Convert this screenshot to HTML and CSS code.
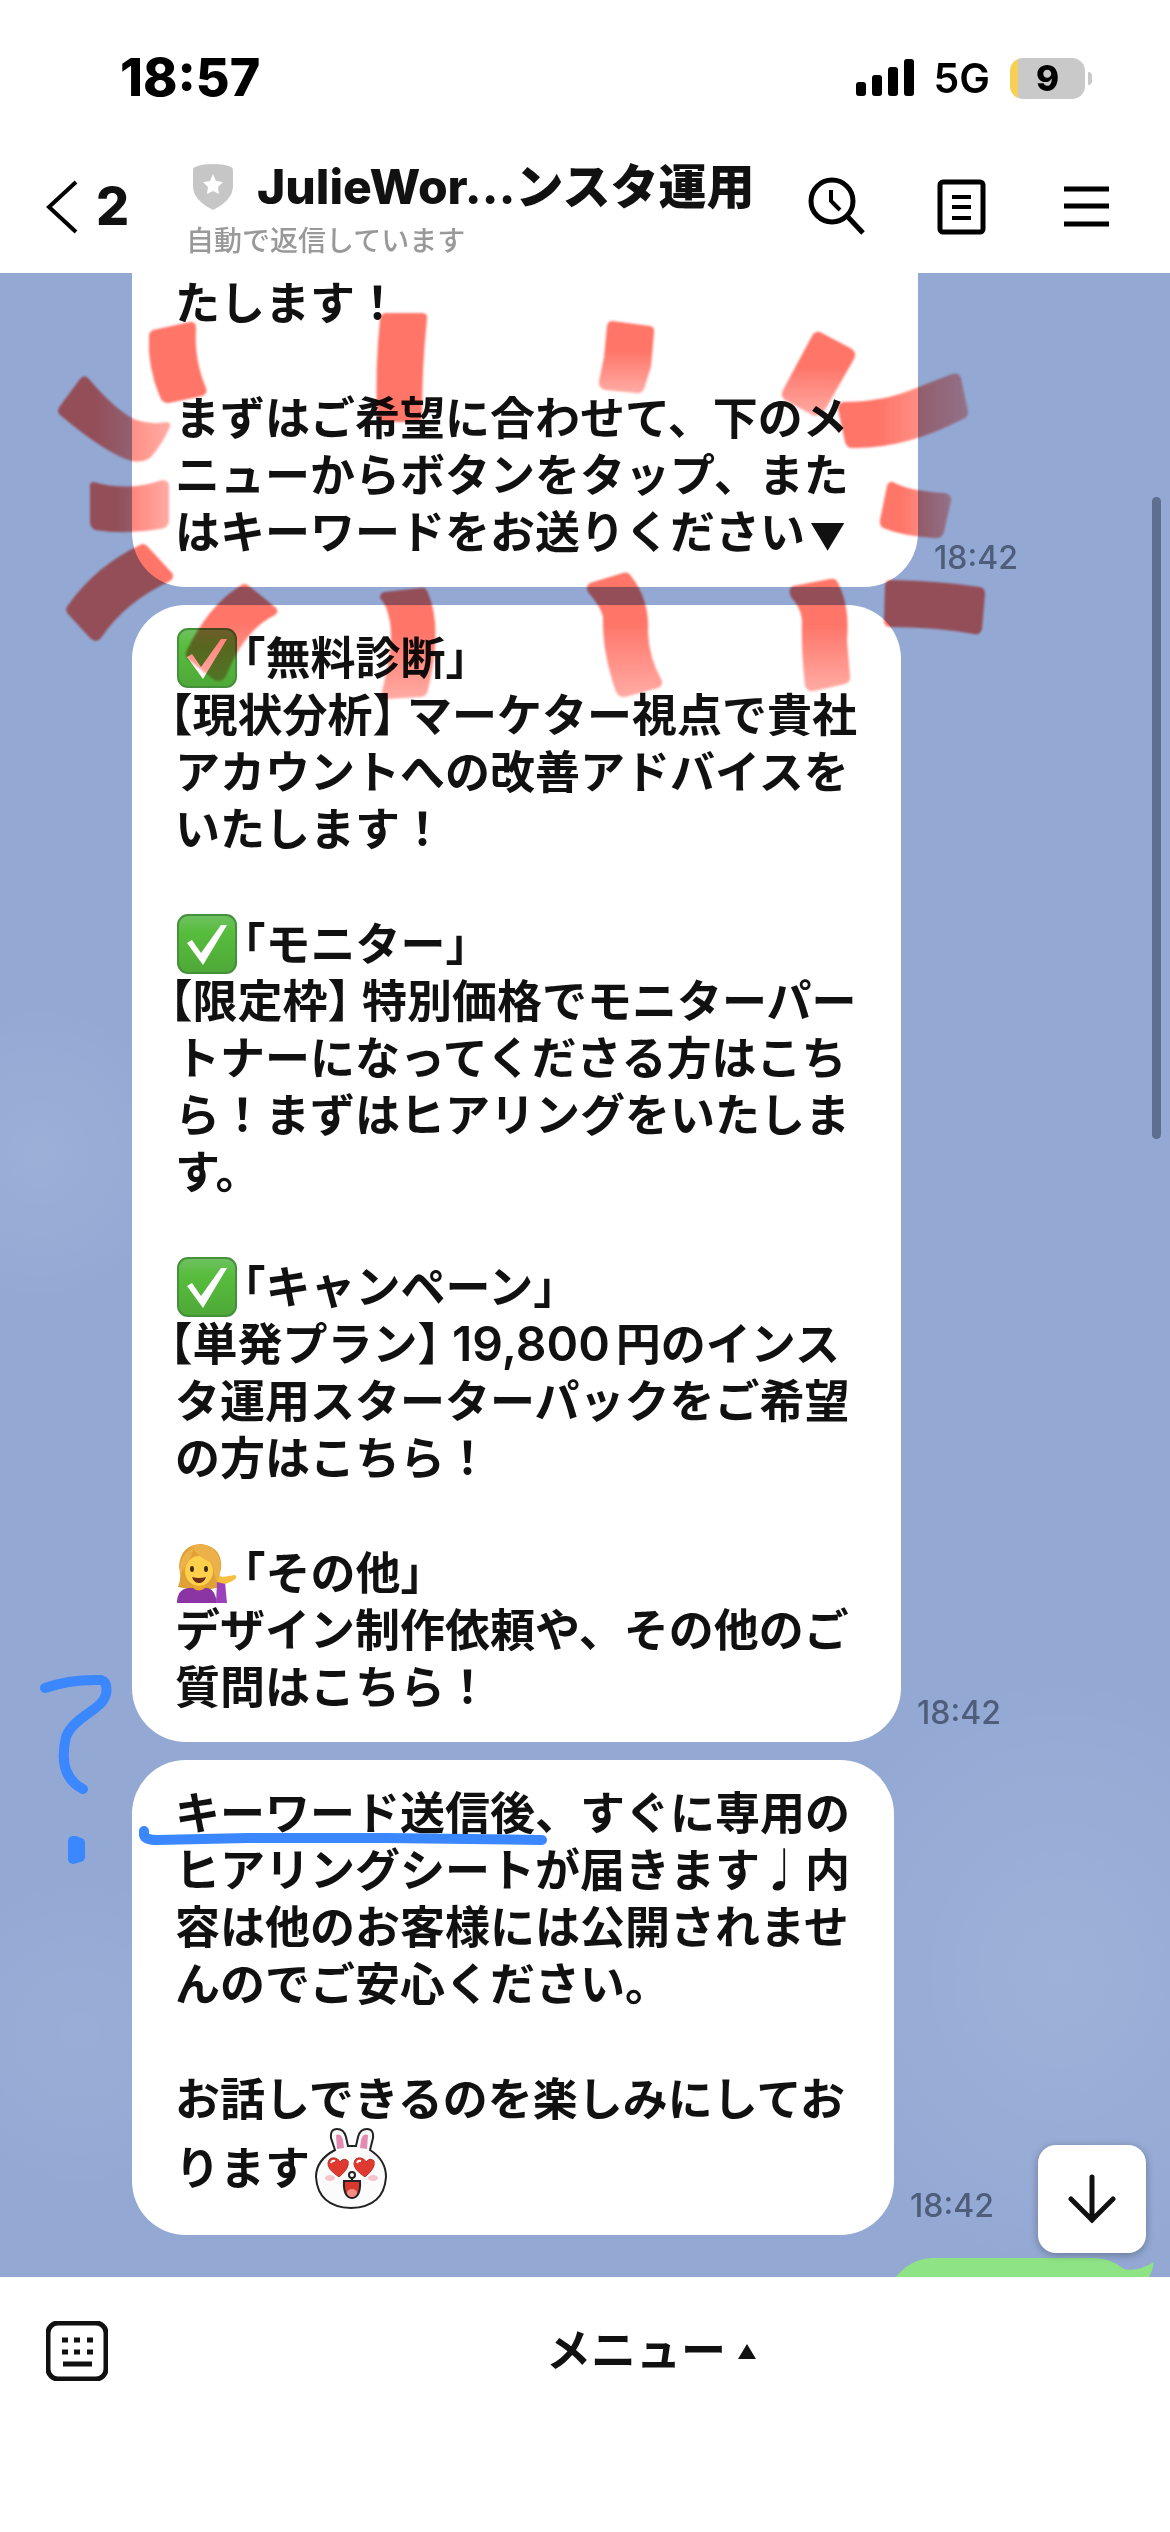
FILE: index.html
```html
<!DOCTYPE html>
<html lang="ja">
<head>
    <meta charset="UTF-8">
    <meta name="viewport" content="width=device-width, initial-scale=1.0">
    <title>JulieWor…ンスタ運用</title>
    <link rel="stylesheet" href="styles.css">
</head>
<body>
    <!-- Shared emoji shapes -->
    <svg class="defs" width="0" height="0" aria-hidden="true">
        <defs>
            <linearGradient id="green" x1="0" y1="0" x2="0" y2="1">
                <stop offset="0" stop-color="#6fc163"/>
                <stop offset="0.3" stop-color="#57bd3c"/>
                <stop offset="1" stop-color="#4ea838"/>
            </linearGradient>
            <symbol id="check" viewBox="0 0 60 60">
                <rect x="1" y="1" width="58" height="58" rx="10" fill="url(#green)" stroke="#45903a" stroke-width="2"/>
                <path d="M10 29 L15 26 L24 39 L44 11 H50 L26 51 Z" fill="#fff"/>
            </symbol>
        </defs>
    </svg>

    <header class="header">
        <div class="status-bar">
            <span class="clock">18:57</span>
            <div class="status-icons">
                <svg class="signal" width="58" height="38" viewBox="0 0 58 38">
                    <rect x="0" y="23" width="10" height="14" rx="3"/>
                    <rect x="16" y="16" width="10" height="21" rx="3"/>
                    <rect x="32" y="8" width="10" height="29" rx="3"/>
                    <rect x="48" y="0" width="10" height="37" rx="3"/>
                </svg>
                <span class="network">5G</span>
                <div class="battery"><span class="battery-level">9</span></div>
            </div>
        </div>
        <nav class="nav-bar">
            <button class="back-btn">
                <svg width="38" height="56" viewBox="0 0 38 56"><path d="M32 3 L5 28 L32 53" fill="none" stroke="#000" stroke-width="4"/></svg>
                <span>2</span>
            </button>
            <div class="title-block">
                <div class="title-row">
                    <svg class="shield" width="40" height="46" viewBox="0 0 40 46">
                        <path d="M20 0 Q32 0 38 3 Q40 4 40 6 V22 Q40 36 20 46 Q0 36 0 22 V6 Q0 4 2 3 Q8 0 20 0 Z" fill="#c6c6c6"/>
                        <path d="M20 10 L23 17 L30 18 L25 23 L26 30 L20 27 L14 30 L15 23 L10 18 L17 17 Z" fill="#fff"/>
                    </svg>
                    <h1>JulieWor…ンスタ運用</h1>
                </div>
                <p class="subtitle">自動で返信しています</p>
            </div>
            <div class="nav-icons">
                <button class="icon-btn" aria-label="検索">
                    <svg width="60" height="60" viewBox="0 0 60 60" fill="none" stroke="#000">
                        <circle cx="26" cy="24" r="21" stroke-width="5"/>
                        <path d="M25 13 V24 L34 33" stroke-width="4"/>
                        <path d="M41 39 L57 56" stroke-width="5"/>
                    </svg>
                </button>
                <button class="icon-btn" aria-label="ノート">
                    <svg width="60" height="60" viewBox="0 0 60 60" fill="none" stroke="#000">
                        <rect x="9" y="5" width="43" height="50" rx="3" stroke-width="5"/>
                        <path d="M21 20 H40 M21 30 H40 M21 41 H40" stroke-width="4"/>
                    </svg>
                </button>
                <button class="icon-btn" aria-label="メニュー">
                    <svg width="60" height="60" viewBox="0 0 60 60" fill="none" stroke="#000" stroke-width="5">
                        <path d="M8 12 H53 M8 29 H53 M8 47 H53"/>
                    </svg>
                </button>
            </div>
        </nav>
    </header>

    <main class="chat">
        <div class="message">
            <div class="bubble bubble-cut">
                <p>たします！</p>
                <p>まずはご希望に合わせて、下のメ<br>ニューからボタンをタップ、また<br>はキーワードをお送りください<span class="mark">▼</span></p>
            </div>
            <time class="time">18:42</time>
        </div>

        <div class="message">
            <div class="bubble">
                <p><svg class="emoji" role="img" aria-label="チェック"><use href="#check"/></svg><span class="half">「</span>無料診断<span class="half">」</span><br><span class="half open">【</span>現状分析<span class="half close">】</span>マーケター視点で貴社<br>アカウントへの改善アドバイスを<br>いたします！</p>
                <p><svg class="emoji" role="img" aria-label="チェック"><use href="#check"/></svg><span class="half">「</span>モニター<span class="half">」</span><br><span class="half open">【</span>限定枠<span class="half close">】</span>特別価格でモニターパー<br>トナーになってくださる方はこち<br>ら！まずはヒアリングをいたしま<br>す。</p>
                <p><svg class="emoji" role="img" aria-label="チェック"><use href="#check"/></svg><span class="half">「</span>キャンペーン<span class="half">」</span><br><span class="half open">【</span>単発プラン<span class="half close">】</span><span class="price">19,800</span>円のインス<br>タ運用スターターパックをご希望<br>の方はこちら！</p>
                <p><svg class="emoji" role="img" aria-label="女性" viewBox="0 0 60 60">
                    <path d="M1 44 Q5 34 2 24 Q3 2 24 1 Q46 4 44 26 Q41 34 43 44 Q24 50 1 44 Z" fill="#dfa035"/>
                    <path d="M0 60 Q0 46 12 45 L30 45 Q38 46 40 60 Z" fill="#8b35a5"/>
                    <path d="M16 38 H28 V45 Q22 50 16 45 Z" fill="#e9a92c"/>
                    <ellipse cx="22" cy="28" rx="14" ry="15" fill="#ffd04c"/>
                    <path d="M3 32 Q1 12 17 4 Q14 17 7 25 Z M14 4 Q22 15 35 20 L39 38 Q49 20 37 7 Q26 -2 14 4 Z" fill="#edb149"/>
                    <ellipse cx="15" cy="26" rx="2" ry="3" fill="#3f2a1a"/>
                    <ellipse cx="29" cy="26" rx="2" ry="3" fill="#3f2a1a"/>
                    <path d="M15 34 Q22 36 29 34 Q27 40 22 40 Q17 40 15 34 Z" fill="#6b2e1c"/>
                    <path d="M40 39 H48 L50 60 H39 Z" fill="#9b42b8"/>
                    <path d="M40 39 Q40 31 46 34 L58 32 Q62 35 53 39 L48 41 Z" fill="#f7bd3c"/>
                </svg><span class="half">「</span>その他<span class="half">」</span><br>デザイン制作依頼や、その他のご<br>質問はこちら！</p>
            </div>
            <time class="time">18:42</time>
        </div>

        <div class="message">
            <div class="bubble">
                <p>キーワード送信後、すぐに専用の<br>ヒアリングシートが届きます<span class="note">♩</span>内<br>容は他のお客様には公開されませ<br>んのでご安心ください。</p>
                <p>お話しできるのを楽しみにしてお<br>ります<svg class="sticker" role="img" aria-label="うさぎ" viewBox="0 0 72 81">
                    <path d="M20 22 L16 10 Q15 1 22 1 Q29 1 31 9 L33 18 H41 L43 9 Q45 1 52 1 Q59 1 58 10 L55 22 Q71 32 71 49 Q69 79 36 80 Q3 79 1 49 Q1 32 20 22 Z" fill="#fbfbfb" stroke="#222" stroke-width="2"/>
                    <path d="M21 7 Q26 5 28 12 L29 20 L22 21 Z M53 7 Q48 5 46 12 L45 20 L52 21 Z" fill="#e38bb0"/>
                    <path d="M24 49 Q12 41 13 35 Q14 29 20 30 Q24 31 25 34 Q29 29 33 33 Q35 40 24 49 Z M50 49 Q38 41 39 35 Q40 29 46 30 Q50 31 51 34 Q55 29 59 33 Q61 40 50 49 Z" fill="#e03a30" stroke="#b8342e"/>
                    <path d="M16 35 Q17 32 20 33 M42 35 Q43 32 46 33" fill="none" stroke="#fff" stroke-width="2"/>
                    <ellipse cx="15" cy="50" rx="5" ry="3" fill="#f7c3cd"/>
                    <ellipse cx="58" cy="50" rx="5" ry="3" fill="#f7c3cd"/>
                    <ellipse cx="37" cy="47" rx="3" ry="3" fill="#fff" stroke="#222" stroke-width="2"/>
                    <path d="M37 50 V54 M29 53 H45 Q46 69 37 70 Q28 69 29 53 Z" fill="#d8382e" stroke="#222" stroke-width="2"/>
                    <ellipse cx="37" cy="65" rx="5" ry="4" fill="#f58c86"/>
                </svg></p>
            </div>
            <time class="time">18:42</time>
        </div>

        <!-- Top edge of the next sent message -->
        <svg class="sent" width="260" height="19" viewBox="0 0 260 19">
            <path d="M0 19 Q14 1 36 0 H198 Q214 0 228 11 Q242 14 258 4 Q257 12 253 19 Z" fill="#8ee484"/>
        </svg>

        <div class="scrollbar"></div>

        <!-- Red marker strokes -->
        <svg class="marker" viewBox="0 273 1170 2004" preserveAspectRatio="xMidYMin meet" aria-hidden="true">
            <defs>
                <linearGradient id="fadeDown" x1="0" y1="0" x2="0" y2="1">
                    <stop offset="0.4" stop-color="#ff7468"/>
                    <stop offset="1" stop-color="#ff7468" stop-opacity="0.6"/>
                </linearGradient>
                <linearGradient id="fadeRight" x1="0" y1="0" x2="1" y2="0">
                    <stop offset="0.3" stop-color="#ff7468"/>
                    <stop offset="1" stop-color="#ff7468" stop-opacity="0.6"/>
                </linearGradient>
                <filter id="soft"><feGaussianBlur stdDeviation="1"/></filter>
            </defs>
            <g fill="#ff7468" stroke-linejoin="round" filter="url(#soft)">
                <path d="M153 330 L190 322 Q196 321 196 328 Q194 360 206 388 Q208 394 202 396 L169 403 Q162 403 160 397 Q147 366 149 336 Q149 332 153 330 Z"/>
                <path d="M386 313 L422 313 Q428 313 427 319 Q422 366 422 417 Q422 422 416 422 H383 Q377 422 377 416 Q375 368 380 319 Q381 313 386 313 Z"/>
                <path d="M88 378 Q116 411 136 420 Q152 425 167 422 Q173 423 168 431 Q162 444 151 457 Q144 463 132 461 Q108 455 60 415 Q56 411 60 406 L80 379 Q84 374 88 378 Z" fill="url(#fadeRight)"/>
                <path d="M93 482 Q129 492 162 480 Q169 480 169 486 V522 Q168 528 160 529 Q126 535 95 530 Q91 528 90 523 V488 Q89 483 93 482 Z" fill="url(#fadeRight)"/>
                <path d="M140 545 Q144 542 149 548 L172 573 Q175 577 170 581 Q125 602 101 638 Q96 644 90 638 L68 614 Q64 609 69 604 Q96 566 140 545 Z"/>
                <path d="M240 586 Q244 582 249 586 L275 607 Q280 611 275 615 Q245 629 226 676 Q222 683 214 680 L189 660 Q184 656 187 650 Q209 605 240 586 Z" fill="url(#fadeDown)"/>
                <path d="M384 592 L421 588 Q426 587 428 593 Q443 627 428 690 Q427 697 420 697 L388 699 Q381 699 382 691 Q394 645 390 622 Q387 605 380 598 Q380 593 384 592 Z" fill="url(#fadeDown)"/>
                <path d="M612 321 L650 326 Q655 327 654 333 L651 367 L644 389 Q642 394 636 393 L605 390 Q598 388 599 381 L604 357 L607 326 Q608 321 612 321 Z" fill="url(#fadeDown)"/>
                <path d="M820 332 L852 349 Q857 353 854 359 L829 403 Q822 417 814 416 L785 400 Q780 396 783 390 L812 336 Q815 331 820 332 Z" fill="url(#fadeDown)"/>
                <path d="M843 402 Q884 402 916 388 L952 374 Q959 372 961 378 L968 411 Q969 417 963 419 Q905 449 852 448 Q847 448 845 442 L838 409 Q838 403 843 402 Z" fill="url(#fadeRight)"/>
                <path d="M893 482 Q908 491 945 493 Q952 495 951 501 L944 532 Q942 539 935 538 Q903 536 883 528 Q879 525 880 520 L887 486 Q889 481 893 482 Z" fill="url(#fadeRight)"/>
                <path d="M890 580 Q941 581 980 587 Q985 588 985 594 L982 629 Q980 636 974 634 Q937 627 889 627 Q884 626 884 621 L885 585 Q886 580 890 580 Z"/>
                <path d="M590 583 L623 573 Q628 571 631 576 Q650 600 648 633 Q649 658 662 681 Q663 686 658 688 L625 697 Q619 698 616 692 Q602 652 603 617 Q601 607 588 592 Q585 586 590 583 Z" fill="url(#fadeDown)"/>
                <path d="M793 586 L830 579 Q836 578 838 583 Q850 606 847 640 L850 676 Q851 682 845 684 L814 691 Q807 692 805 686 Q801 650 802 620 Q801 608 791 597 Q787 589 793 586 Z" fill="url(#fadeDown)"/>
            </g>
        </svg>

        <!-- Blue pen strokes -->
        <svg class="pen" viewBox="0 273 1170 2004" preserveAspectRatio="xMidYMin meet" aria-hidden="true">
            <g fill="none" stroke="#3b87ff" stroke-width="10" stroke-linecap="round" stroke-linejoin="round">
                <path d="M45 1688 Q70 1679 101 1680 Q108 1682 106 1694 C103 1710 74 1716 66 1737 Q57 1776 83 1789"/>
                <path d="M73 1841 V1859 L80 1857 V1843 L75 1841 L77 1855"/>
                <path d="M144 1831 V1835 Q145 1840 157 1840 L248 1838 H385 L542 1840"/>
            </g>
        </svg>

        <button class="scroll-btn" aria-label="最新のメッセージへ">
            <svg width="48" height="50" viewBox="0 0 48 50" fill="none" stroke="#111" stroke-width="5" stroke-linecap="round"><path d="M24 3 V46 M3 25 L24 46 L45 25"/></svg>
        </button>
    </main>

    <footer class="footer">
        <button class="icon-btn" aria-label="キーボード">
            <svg width="62" height="60" viewBox="0 0 62 60" fill="none" stroke="#111">
                <rect x="2" y="2" width="58" height="56" rx="10" stroke-width="5"/>
                <path d="M16 19 H22 M28 19 H34 M41 19 H47 M16 31 H22 M28 31 H34 M41 31 H47" stroke-width="5"/>
                <path d="M17 43 H46" stroke-width="5"/>
            </svg>
        </button>
        <button class="menu-btn">メニュー
            <svg width="18" height="15" viewBox="0 0 18 15"><path d="M9 0 L18 15 H0 Z" fill="#111"/></svg>
        </button>
    </footer>
</body>
</html>
```

FILE: styles.css
```css
* {
    box-sizing: border-box;
}

body {
    display: flex;
    flex-direction: column;
    min-height: 100vh;
    margin: 0;
    background: #fff;
    color: #111;
    font-family: Inter, "Noto Sans CJK JP", sans-serif;
}

button {
    padding: 0;
    border: none;
    background: none;
    color: inherit;
    font-family: inherit;
    cursor: pointer;
}

svg {
    display: block;
}

.defs {
    position: absolute;
}

/* Status bar */
.status-bar {
    display: flex;
    align-items: center;
    justify-content: space-between;
    padding: 48px 79px 0 120px;
    line-height: 60px;
    color: #000;
}

.clock {
    font-size: 52px;
    font-weight: 800;
}

.status-icons {
    display: flex;
    align-items: center;
}

.network {
    margin: 0 20px;
    font-size: 41px;
    font-weight: 600;
}

.battery {
    position: relative;
    width: 75px;
    height: 41px;
    margin-right: 6px;
    border-radius: 13px;
    background: linear-gradient(to right, #f7cf55 8px, #c9c9c9 8px);
    text-align: center;
}

.battery::after {
    content: "";
    position: absolute;
    top: 14px;
    right: -7px;
    width: 4px;
    height: 13px;
    border-radius: 0 4px 4px 0;
    background: #c9c9c9;
}

.battery-level {
    display: block;
    font-size: 35px;
    font-weight: 800;
    line-height: 41px;
}

/* Navigation */
.nav-bar {
    display: grid;
    grid-template-columns: 142px 1fr auto;
    align-items: center;
    padding: 33px 54px 0 44px;
    height: 165px;
}

.back-btn {
    display: flex;
    align-items: center;
    gap: 14px;
    font-size: 52px;
    font-weight: 800;
    line-height: 56px;
}

.title-block {
    padding-top: 8px;
}

.title-row {
    display: flex;
    align-items: center;
    gap: 24px;
    padding-left: 7px;
}

h1 {
    margin: 0;
    font-size: 48px;
    font-weight: 800;
    line-height: 56px;
    white-space: nowrap;
}

.subtitle {
    margin: 4px 0 0;
    color: #999;
    font-size: 28px;
    font-weight: 500;
    line-height: 44px;
}

.nav-icons {
    display: flex;
    gap: 65px;
}

/* Chat */
.chat {
    position: relative;
    flex: 1;
    display: flex;
    flex-direction: column;
    gap: 18px;
    overflow: hidden;
    padding-left: 132px;
    background:
        radial-gradient(ellipse 140px 150px at 40px 880px, rgba(255, 255, 255, 0.08), transparent),
        radial-gradient(ellipse 260px 300px at 1060px 1700px, rgba(255, 255, 255, 0.1), transparent),
        radial-gradient(ellipse 160px 160px at 80px 1760px, rgba(255, 255, 255, 0.06), transparent),
        #93a9d4;
}

.message {
    display: flex;
    align-items: flex-end;
    gap: 16px;
}

.bubble {
    padding: 25px 44px 26px 43px;
    border-radius: 54px;
    background: #fff;
    font-size: 45px;
    font-weight: 600;
    line-height: 57px;
    white-space: nowrap;
}

.bubble-cut {
    padding-top: 2px;
    padding-right: 68px;
    border-radius: 0 0 54px 54px;
}

.bubble p {
    margin: 0;
}

.bubble p + p {
    margin-top: 58px;
}

.half {
    font-feature-settings: "halt";
}

.open {
    margin-left: -5px;
}

.close {
    margin-right: 12px;
}

.price {
    margin-right: 6px;
    font-size: 48px;
    font-weight: 600;
    line-height: 48px;
}

.note,
.mark {
    display: inline-block;
    width: 45px;
    text-align: center;
}

.mark {
    font-size: 36px;
    line-height: 48px;
}

.emoji {
    display: inline-block;
    width: 60px;
    height: 60px;
    margin: -4px 6px -4px 2px;
    vertical-align: -9px;
}

.sticker {
    display: inline-block;
    width: 72px;
    height: 81px;
    margin-left: 5px;
    vertical-align: -24px;
}

.time {
    margin-bottom: 10px;
    color: #4e5d7a;
    font-size: 32px;
    font-weight: 500;
    line-height: 38px;
}

.sent {
    align-self: flex-end;
    margin: auto 14px 0 0;
}

.scrollbar {
    position: absolute;
    top: 224px;
    right: 9px;
    width: 9px;
    height: 642px;
    border-radius: 5px;
    background: #5e6e8e;
}

.marker,
.pen {
    position: absolute;
    top: 0;
    left: 0;
    width: 100%;
    pointer-events: none;
}

.marker {
    mix-blend-mode: multiply;
}

.scroll-btn {
    position: absolute;
    right: 24px;
    bottom: 24px;
    display: flex;
    align-items: center;
    justify-content: center;
    width: 108px;
    height: 108px;
    border-radius: 18px;
    background: #fff;
    box-shadow: 0 2px 8px rgba(0, 0, 0, 0.3);
}

/* Bottom menu */
.footer {
    display: grid;
    grid-template-columns: 86px 1fr;
    align-items: center;
    padding: 42px 0 149px 46px;
}

.menu-btn {
    display: flex;
    align-items: center;
    justify-content: center;
    gap: 12px;
    font-size: 45px;
    font-weight: 600;
    line-height: 64px;
}
```
